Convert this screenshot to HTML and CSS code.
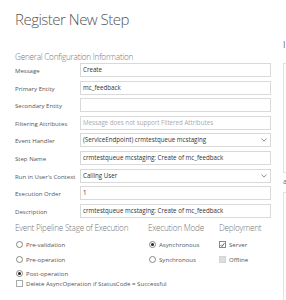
FILE: index.html
```html
<!DOCTYPE html>
<html>
<head>
<meta charset="utf-8">
<link rel="stylesheet" href="styles.css">
</head>
<body>
<div class="page">
  <div class="main">
    <h1 class="title">Register New Step</h1>
    <h2 class="section">General Configuration Information</h2>
    <div class="form">
      <div class="label">Message</div>
      <div class="field">Create</div>
      <div class="label">Primary Entity</div>
      <div class="field">mc_feedback</div>
      <div class="label">Secondary Entity</div>
      <div class="field"></div>
      <div class="label">Filtering Attributes</div>
      <div class="field placeholder">Message does not support Filtered Attributes</div>
      <div class="label">Event Handler</div>
      <div class="field select"><span>(ServiceEndpoint) crmtestqueue mcstaging</span><svg class="chev" viewBox="0 0 8 5" width="6" height="4"><path d="M0.5 0.5 L4 4 L7.5 0.5" fill="none" stroke="#666" stroke-width="1"/></svg></div>
      <div class="label">Step Name</div>
      <div class="field">crmtestqueue mcstaging: Create of mc_feedback</div>
      <div class="label">Run in User's Context</div>
      <div class="field select"><span>Calling User</span><svg class="chev" viewBox="0 0 8 5" width="6" height="4"><path d="M0.5 0.5 L4 4 L7.5 0.5" fill="none" stroke="#666" stroke-width="1"/></svg></div>
      <div class="label">Execution Order</div>
      <div class="field">1</div>
      <div class="label">Description</div>
      <div class="field">crmtestqueue mcstaging: Create of mc_feedback</div>
    </div>
    <div class="options">
      <div class="col col-stage">
        <h3 class="section">Event Pipeline Stage of Execution</h3>
        <div class="opt"><span class="radio"></span>Pre-validation</div>
        <div class="opt"><span class="radio"></span>Pre-operation</div>
        <div class="opt"><span class="radio on"></span>Post-operation</div>
      </div>
      <div class="col col-mode">
        <h3 class="section">Execution Mode</h3>
        <div class="opt"><span class="radio on"></span>Asynchronous</div>
        <div class="opt"><span class="radio"></span>Synchronous</div>
      </div>
      <div class="col col-deploy">
        <h3 class="section">Deployment</h3>
        <div class="opt"><span class="check on"><svg viewBox="0 0 8 8" width="6" height="6"><path d="M1 4.2 L3 6.3 L7 1.2" fill="none" stroke="#222" stroke-width="1.2"/></svg></span>Server</div>
        <div class="opt"><span class="check off"></span>Offline</div>
      </div>
    </div>
    <div class="opt delete"><span class="check"></span>Delete AsyncOperation if StatusCode = Successful</div>
  </div>
  <div class="side">
    <div class="side-head">I</div>
    <div class="side-box tall"></div>
    <div class="side-text">a</div>
    <div class="side-box"></div>
  </div>
</div>
</body>
</html>
```
FILE: styles.css
```css
html, body {
  margin: 0;
  padding: 0;
  background: #fff;
  overflow: hidden;
}
body {
  font-family: "Open Sans", "Noto Sans", sans-serif;
  color: #444;
  width: 286px;
  height: 300px;
}
.page {
  display: flex;
  width: 400px;
}
.main {
  width: 256px;
  padding: 8px 0 0 15px;
  flex: none;
}
.title {
  margin: 0;
  font-size: 15px;
  line-height: 22px;
  font-weight: 300;
  letter-spacing: -0.5px;
  color: #555;
}
.section {
  margin: 21px 0 0 0;
  font-size: 8.2px;
  line-height: 12px;
  font-weight: 300;
  letter-spacing: -0.25px;
  color: #777;
  white-space: nowrap;
}
.form {
  display: grid;
  grid-template-columns: 65px 191px;
  grid-auto-rows: 14px;
  row-gap: 3.6px;
}
.label {
  font-size: 6.05px;
  line-height: 14px;
  color: #555;
  white-space: nowrap;
  padding-top: 1px;
}
.field {
  box-sizing: border-box;
  border: 1px solid #d9d9d9;
  font-size: 6.2px;
  line-height: 12px;
  padding: 0 2px;
  color: #333;
  white-space: nowrap;
  overflow: hidden;
  display: flex;
  align-items: center;
}
.field.placeholder {
  color: #aaa;
}
.field.select {
  justify-content: space-between;
  padding-right: 3px;
}
.chev {
  flex: none;
}
.options {
  display: grid;
  grid-template-columns: 133px 71px 52px;
}
.options .section {
  margin: 4px 0 4px 0;
}
.opt {
  display: flex;
  align-items: center;
  height: 14.3px;
  font-size: 6.1px;
  color: #555;
  white-space: nowrap;
}
.radio {
  box-sizing: border-box;
  width: 7px;
  height: 7px;
  border: 1px solid #888;
  border-radius: 50%;
  margin: 0 3px 0 1px;
  flex: none;
  display: flex;
  align-items: center;
  justify-content: center;
}
.radio.on::after {
  content: "";
  width: 3px;
  height: 3px;
  border-radius: 50%;
  background: #222;
}
.check {
  box-sizing: border-box;
  width: 7px;
  height: 7px;
  border: 1px solid #aaa;
  margin: 0 3px 0 0;
  flex: none;
  display: flex;
  align-items: center;
  justify-content: center;
}
.check.on {
  border-color: #888;
}
.check.off {
  background: #ddd;
  border-color: #d4d4d4;
}
.opt.delete {
  height: 10px;
  margin-top: -2px;
}
.opt.delete .check {
  margin-left: 1px;
}
.side {
  flex: none;
  margin-left: 12px;
  width: 100px;
  padding-top: 40px;
}
.side-head {
  font-size: 9px;
  line-height: 10px;
  color: #666;
  height: 23px;
}
.side-box {
  border: 1px solid #e2e2e2;
  height: 108px;
}
.side-text {
  font-size: 7px;
  line-height: 10px;
  color: #666;
  height: 19px;
  padding-top: 4px;
  box-sizing: border-box;
}
```
